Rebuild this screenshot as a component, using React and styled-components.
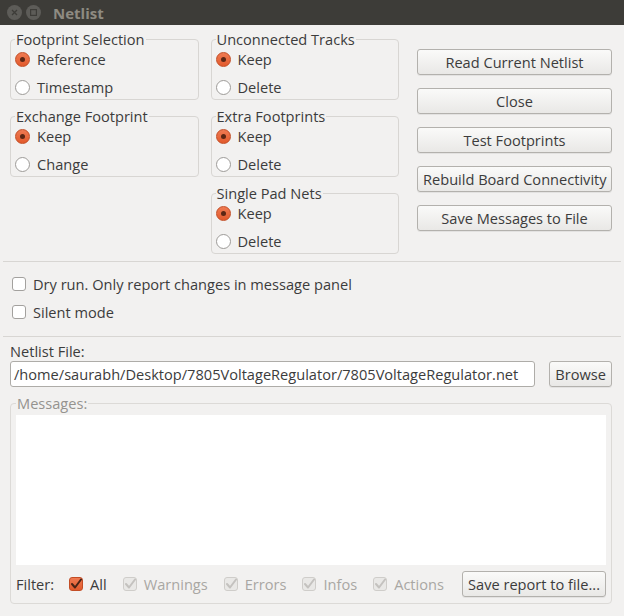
import styled, { createGlobalStyle, css } from "styled-components";

const GlobalStyle = createGlobalStyle`
  html, body {
    margin: 0;
    padding: 0;
    background: #f2f1f0;
  }
  * {
    box-sizing: border-box;
  }
`;

const Window = styled.div`
  width: 624px;
  height: 616px;
  background: #f2f1f0;
  font-family: "Open Sans", "DejaVu Sans", sans-serif;
  font-size: 14.6px;
  color: #3c3c3c;
  overflow: hidden;
`;

const TitleBar = styled.div`
  height: 25px;
  background: #3d3c38;
  display: flex;
  align-items: center;
  padding-left: 7px;
  gap: 4px;
`;

const WinButton = styled.div`
  width: 15px;
  height: 15px;
  border-radius: 50%;
  background: #5d5c58;
  display: flex;
  align-items: center;
  justify-content: center;
`;

const TitleText = styled.span`
  margin-left: 8px;
  font-weight: bold;
  font-size: 15px;
  color: #8e8b82;
`;

const Top = styled.div`
  display: flex;
  padding: 6px 12px 0 10px;
  gap: 12px;
  height: 236px;
`;

const Column = styled.div`
  width: 189px;
  display: flex;
  flex-direction: column;
  gap: 8px;
`;

const ButtonColumn = styled.div`
  margin-left: 6px;
  margin-top: 18px;
  width: 195px;
  display: flex;
  flex-direction: column;
  gap: 13px;
`;

const Group = styled.fieldset`
  margin: 0;
  padding: 0 4px 0 4px;
  border: 1px solid #d8d6d3;
  border-radius: 4px;
  display: flex;
  flex-direction: column;
  gap: 4px;
  min-width: 0;
`;

const Legend = styled.legend`
  padding: 0 1px;
  margin-left: 0;
  line-height: 16px;
  color: ${(p) => (p.$muted ? "#95938f" : "#3c3c3c")};
`;

const OptionRow = styled.label`
  height: 24px;
  display: flex;
  align-items: center;
  gap: 7px;
`;

const Radio = styled.span`
  width: 15px;
  height: 15px;
  border-radius: 50%;
  flex-shrink: 0;
  display: flex;
  align-items: center;
  justify-content: center;
  ${(p) =>
    p.$on
      ? css`
          background: linear-gradient(#ef7a52, #e25a2c);
          border: 1px solid #c34d25;
          &::after {
            content: "";
            width: 5px;
            height: 5px;
            border-radius: 50%;
            background: #5b2614;
          }
        `
      : css`
          background: #ffffff;
          border: 1px solid #9d9b98;
        `}
`;

const Button = styled.button`
  height: 26px;
  padding: 0 5px;
  border: 1px solid #b3b1ad;
  border-radius: 3px;
  background: linear-gradient(#fafaf9, #e9e8e6);
  font-family: inherit;
  font-size: 14.6px;
  color: #3c3c3c;
  white-space: nowrap;
  box-shadow: 0 1px 0 rgba(0, 0, 0, 0.06);
`;

const Separator = styled.hr`
  margin: 0 3px;
  border: none;
  border-top: 1px solid #d8d6d3;
`;

const Options = styled.div`
  padding: 8px 12px 10px;
  display: flex;
  flex-direction: column;
`;

const CheckRow = styled.label`
  height: 28px;
  display: flex;
  align-items: center;
  gap: 7px;
  color: ${(p) => (p.$disabled ? "#a9a7a3" : "#3c3c3c")};
`;

const Box = styled.span`
  width: 14px;
  height: 14px;
  border-radius: 3px;
  flex-shrink: 0;
  display: flex;
  align-items: center;
  justify-content: center;
  ${(p) =>
    p.$variant === "on"
      ? css`
          background: linear-gradient(#ef7a52, #e25a2c);
          border: 1px solid #c34d25;
        `
      : p.$variant === "disabled"
      ? css`
          background: #e9e8e6;
          border: 1px solid #cfcdca;
        `
      : css`
          background: #ffffff;
          border: 1px solid #a3a19e;
        `}
`;

const FileSection = styled.div`
  padding: 5px 12px 0 10px;
`;

const FileLabel = styled.div`
  line-height: 18px;
`;

const FileRow = styled.div`
  display: flex;
  gap: 14px;
  margin-top: 1px;
  height: 26px;
`;

const PathInput = styled.div`
  flex: 1;
  border: 1px solid #aeaca8;
  border-radius: 3px;
  background: #ffffff;
  padding: 0 3px;
  display: flex;
  align-items: center;
  white-space: nowrap;
  overflow: hidden;
`;

const MessagesGroup = styled.fieldset`
  margin: 8px 12px 0 10px;
  padding: 0 5px 6px 5px;
  border: 1px solid #dcdad7;
  border-radius: 4px;
  display: flex;
  flex-direction: column;
  min-width: 0;
`;

const MessageArea = styled.div`
  height: 150px;
  background: #ffffff;
  margin-top: 4px;
`;

const FilterRow = styled.div`
  display: flex;
  align-items: center;
  margin-top: 6px;
  height: 26px;
`;

const FilterLabel = styled.span`
  margin-right: 15px;
`;

const FilterItem = styled(CheckRow)`
  margin-right: 16px;
  height: 26px;
`;

const Spacer = styled.div`
  flex: 1;
`;

const Check = ({ color }) => (
  <svg width="12" height="12" viewBox="0 0 12 12">
    <path
      d="M2 6 L5 9.5 L11 1.5"
      fill="none"
      stroke={color}
      strokeWidth="2"
      strokeLinecap="round"
      strokeLinejoin="round"
    />
  </svg>
);

const RadioGroup = ({ title, options, selected }) => (
  <Group>
    <Legend>{title}</Legend>
    {options.map((o) => (
      <OptionRow key={o}>
        <Radio $on={o === selected} />
        {o}
      </OptionRow>
    ))}
  </Group>
);

const CheckBox = ({ variant, label, as: Comp = CheckRow }) => (
  <Comp $disabled={variant === "disabled"}>
    <Box $variant={variant}>
      {variant === "on" && <Check color="#4a2416" />}
      {variant === "disabled" && <Check color="#c4c2bf" />}
    </Box>
    {label}
  </Comp>
);

const App = () => {
  return (
    <Window>
      <GlobalStyle />
      <TitleBar>
        <WinButton>
          <svg width="7" height="7" viewBox="0 0 7 7">
            <path d="M1 1 L6 6 M6 1 L1 6" stroke="#3d3c38" strokeWidth="1.3" />
          </svg>
        </WinButton>
        <WinButton>
          <svg width="7" height="7" viewBox="0 0 7 7">
            <rect x="0.6" y="0.6" width="5.8" height="5.8" fill="none" stroke="#3d3c38" strokeWidth="1.2" />
          </svg>
        </WinButton>
        <TitleText>Netlist</TitleText>
      </TitleBar>

      <Top>
        <Column>
          <RadioGroup title="Footprint Selection" options={["Reference", "Timestamp"]} selected="Reference" />
          <RadioGroup title="Exchange Footprint" options={["Keep", "Change"]} selected="Keep" />
        </Column>
        <Column>
          <RadioGroup title="Unconnected Tracks" options={["Keep", "Delete"]} selected="Keep" />
          <RadioGroup title="Extra Footprints" options={["Keep", "Delete"]} selected="Keep" />
          <RadioGroup title="Single Pad Nets" options={["Keep", "Delete"]} selected="Keep" />
        </Column>
        <ButtonColumn>
          <Button>Read Current Netlist</Button>
          <Button>Close</Button>
          <Button>Test Footprints</Button>
          <Button>Rebuild Board Connectivity</Button>
          <Button>Save Messages to File</Button>
        </ButtonColumn>
      </Top>

      <Separator />
      <Options>
        <CheckBox variant="off" label="Dry run. Only report changes in message panel" />
        <CheckBox variant="off" label="Silent mode" />
      </Options>
      <Separator />

      <FileSection>
        <FileLabel>Netlist File:</FileLabel>
        <FileRow>
          <PathInput>/home/saurabh/Desktop/7805VoltageRegulator/7805VoltageRegulator.net</PathInput>
          <Button>Browse</Button>
        </FileRow>
      </FileSection>

      <MessagesGroup>
        <Legend $muted>Messages:</Legend>
        <MessageArea />
        <FilterRow>
          <FilterLabel>Filter:</FilterLabel>
          <CheckBox as={FilterItem} variant="on" label="All" />
          <CheckBox as={FilterItem} variant="disabled" label="Warnings" />
          <CheckBox as={FilterItem} variant="disabled" label="Errors" />
          <CheckBox as={FilterItem} variant="disabled" label="Infos" />
          <CheckBox as={FilterItem} variant="disabled" label="Actions" />
          <Spacer />
          <Button>Save report to file...</Button>
        </FilterRow>
      </MessagesGroup>
    </Window>
  );
};

export default App;
